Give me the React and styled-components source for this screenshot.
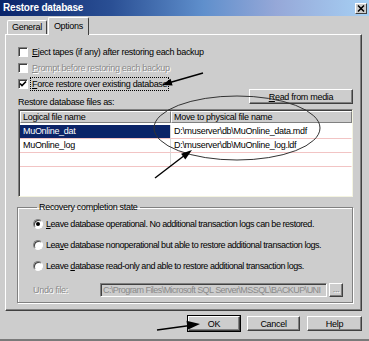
import React from "react";
import styled, { createGlobalStyle } from "styled-components";

const Global = createGlobalStyle`
  html, body { margin: 0; padding: 0; background: #cdcdcd; }
  body {
    font-family: "Liberation Sans", Arial, sans-serif;
    font-size: 9px;
    letter-spacing: -0.3px;
    color: #000;
  }
  * { box-sizing: border-box; }
`;

const Window = styled.div`
  position: relative;
  width: 369px;
  height: 341px;
  background: #cdcdcd;
  border-bottom: 2px solid #7a7a7a;
  display: flex;
  flex-direction: column;
  overflow: hidden;
`;

const TitleBar = styled.div`
  height: 16px;
  display: flex;
  align-items: center;
  justify-content: space-between;
  padding: 0 2px 0 3px;
  background: linear-gradient(to right, #0a246a 0%, #2a4f94 30%, #5f8fcc 55%, #96a8d8 75%, #a6d0f4 100%);
`;

const TitleText = styled.span`
  font-weight: bold;
  font-size: 10px;
  letter-spacing: -0.2px;
  color: #fff;
  line-height: 14px;
`;

const CloseButton = styled.div`
  width: 12px;
  height: 11px;
  background: #cdcdcd;
  border-top: 1px solid #fff;
  border-left: 1px solid #fff;
  border-right: 1px solid #404040;
  border-bottom: 1px solid #404040;
  display: flex;
  align-items: center;
  justify-content: center;
`;

const TabRow = styled.div`
  display: flex;
  align-items: flex-end;
  height: 17px;
  margin: 1px 0 0 7px;
  position: relative;
  z-index: 1;
`;

const Tab = styled.div`
  height: ${(p) => (p.$active ? "18px" : "14px")};
  margin-bottom: ${(p) => (p.$active ? "-1px" : "0")};
  margin-left: ${(p) => (p.$active ? "1px" : "0")};
  padding: 0 ${(p) => (p.$active ? "5px" : "4px")};
  background: #cdcdcd;
  border-top: 1px solid #fff;
  border-left: 1px solid #fff;
  border-right: 1px solid #404040;
  border-radius: 2px 2px 0 0;
  line-height: ${(p) => (p.$active ? "14px" : "13px")};
  display: flex;
  align-items: ${(p) => (p.$active ? "flex-start" : "center")};
  padding-top: ${(p) => (p.$active ? "1px" : "0")};
`;

const Panel = styled.div`
  margin: 0 7px 0 5px;
  border-top: 1px solid #fff;
  border-left: 1px solid #fff;
  border-right: 1px solid #404040;
  border-bottom: 1px solid #404040;
  box-shadow: inset -1px -1px 0 #808080;
  padding: 9px 8px 7px 12px;
  display: flex;
  flex-direction: column;
`;

const CheckRow = styled.div`
  height: 16px;
  display: flex;
  align-items: center;
  gap: 3px;
  color: ${(p) => (p.$disabled ? "#8a8a8a" : "#000")};
  text-shadow: ${(p) => (p.$disabled ? "1px 1px 0 #fff" : "none")};
`;

const Box = styled.div`
  width: 10px;
  height: 10px;
  background: #fff;
  border-top: 1px solid #808080;
  border-left: 1px solid #808080;
  border-right: 1px solid #fff;
  border-bottom: 1px solid #fff;
  box-shadow: inset 1px 1px 0 #404040;
  display: flex;
  align-items: center;
  justify-content: center;
`;

const Label = styled.span`
  line-height: 12px;
  white-space: nowrap;
  padding: 0 1px;
  border: 1px ${(p) => (p.$focus ? "dotted #000" : "solid transparent")};
  margin-left: -1px;
`;

const FilesRow = styled.div`
  display: flex;
  justify-content: space-between;
  align-items: flex-start;
  margin-top: -3px;
  height: 19px;
`;

const PlainLabel = styled.span`
  margin-top: 7px;
  line-height: 12px;
  white-space: nowrap;
`;

const Button = styled.div`
  width: ${(p) => p.$w}px;
  height: 15px;
  background: #cdcdcd;
  border-top: 1px solid #fff;
  border-left: 1px solid #fff;
  border-right: 1px solid #404040;
  border-bottom: 1px solid #404040;
  box-shadow: inset -1px -1px 0 #808080${(p) => (p.$default ? ", 0 0 0 1px #000" : "")};
  display: flex;
  align-items: center;
  justify-content: center;
  line-height: 12px;
  white-space: nowrap;
  color: ${(p) => (p.$disabled ? "#8a8a8a" : "#000")};
`;

const Table = styled.div`
  margin-top: 1px;
  height: 88px;
  background: #fff;
  border-top: 1px solid #808080;
  border-left: 1px solid #808080;
  border-right: 1px solid #f4f4e0;
  border-bottom: 1px solid #f4f4e0;
  box-shadow: inset 1px 1px 0 #404040;
  display: grid;
  grid-template-columns: 151px 1fr;
  grid-auto-rows: 14px;
  align-content: start;
  padding: 1px 0 0 1px;
`;

const HeadCell = styled.div`
  height: 12px;
  background: #cdcdcd;
  border-top: 1px solid #fff;
  border-left: 1px solid #fff;
  border-right: 1px solid #808080;
  border-bottom: 1px solid #808080;
  line-height: 10px;
  padding-left: 2px;
  white-space: nowrap;
  overflow: hidden;
`;

const Cell = styled.div`
  height: 14px;
  border-bottom: 1px solid #f2c4c4;
  border-right: 1px solid ${(p) => (p.$last ? "transparent" : "#d8d8d8")};
  background: ${(p) => (p.$sel ? "#0b2468" : "#fff")};
  color: ${(p) => (p.$sel ? "#fff" : "#000")};
  line-height: 13px;
  padding-left: 3px;
  white-space: nowrap;
  overflow: hidden;
`;

const Group = styled.fieldset`
  margin: 4px 0 0 -1px;
  padding: 0 0 5px 15px;
  border: 1px solid #808080;
  box-shadow: inset 1px 1px 0 #fff, 1px 1px 0 #fff;
  min-width: 0;
`;

const Legend = styled.legend`
  padding: 0 2px;
  margin-left: 4px;
  line-height: 12px;
`;

const RadioRow = styled.div`
  height: 21px;
  display: flex;
  align-items: center;
  gap: 3px;
  white-space: nowrap;
  letter-spacing: -0.45px;
`;

const Radio = styled.div`
  width: 10px;
  height: 10px;
  flex: none;
  border-radius: 50%;
  background: #fff;
  border: 1px solid;
  border-color: #808080 #fff #fff #808080;
  box-shadow: inset 1px 1px 0 #404040;
  display: flex;
  align-items: center;
  justify-content: center;
  &::after {
    content: "";
    width: 4px;
    height: 4px;
    border-radius: 50%;
    background: ${(p) => (p.$on ? "#000" : "transparent")};
  }
`;

const UndoRow = styled.div`
  margin-top: 7px;
  height: 14px;
  display: flex;
  align-items: center;
`;

const DisabledLabel = styled.span`
  width: 67px;
  flex: none;
  color: #8a8a8a;
  text-shadow: 1px 1px 0 #fff;
  line-height: 12px;
`;

const TextBox = styled.div`
  width: 227px;
  flex: none;
  height: 14px;
  background: #cdcdcd;
  border-top: 1px solid #808080;
  border-left: 1px solid #808080;
  border-right: 1px solid #fff;
  border-bottom: 1px solid #fff;
  box-shadow: inset 1px 1px 0 #404040;
  color: #8a8a8a;
  line-height: 12px;
  padding-left: 2px;
  letter-spacing: -0.55px;
  white-space: nowrap;
  overflow: hidden;
  margin-right: 2px;
`;

const SmallButton = styled.div`
  width: 14px;
  height: 14px;
  flex: none;
  border-top: 1px solid #fff;
  border-left: 1px solid #fff;
  border-right: 1px solid #404040;
  border-bottom: 1px solid #404040;
  box-shadow: inset -1px -1px 0 #808080;
  color: #8a8a8a;
  text-shadow: 1px 1px 0 #fff;
  line-height: 10px;
  text-align: center;
`;

const ButtonRow = styled.div`
  display: flex;
  justify-content: flex-end;
  gap: 7px;
  margin: 5px 7px 0 0;
`;

const Overlay = styled.svg`
  position: absolute;
  left: 0;
  top: 0;
  pointer-events: none;
`;

const Check = () => (
  <svg width="8" height="8" viewBox="0 0 8 8">
    <path d="M1 3.5 L3 5.5 L7 1.5" stroke="#000" strokeWidth="1.6" fill="none" />
  </svg>
);

export default function App() {
  return (
    <>
      <Global />
      <Window>
        <TitleBar>
          <TitleText>Restore database</TitleText>
          <CloseButton>
            <svg width="8" height="7" viewBox="0 0 8 7">
              <path d="M1 0.5 L7 6.5 M7 0.5 L1 6.5" stroke="#000" strokeWidth="1.5" />
            </svg>
          </CloseButton>
        </TitleBar>
        <TabRow>
          <Tab>General</Tab>
          <Tab $active>Options</Tab>
        </TabRow>
        <Panel>
          <CheckRow>
            <Box />
            <Label><u>E</u>ject tapes (if any) after restoring each backup</Label>
          </CheckRow>
          <CheckRow $disabled>
            <Box />
            <Label><u>P</u>rompt before restoring each backup</Label>
          </CheckRow>
          <CheckRow>
            <Box><Check /></Box>
            <Label $focus><u>F</u>orce restore over existing database</Label>
          </CheckRow>
          <FilesRow>
            <PlainLabel>Restore database files as:</PlainLabel>
            <Button $w={104}><u>R</u>ead from media</Button>
          </FilesRow>
          <Table>
            <HeadCell>Logical file name</HeadCell>
            <HeadCell>Move to physical file name</HeadCell>
            <Cell $sel>MuOnline_dat</Cell>
            <Cell $last>D:\muserver\db\MuOnline_data.mdf</Cell>
            <Cell>MuOnline_log</Cell>
            <Cell $last>D:\muserver\db\MuOnline_log.ldf</Cell>
            <Cell />
            <Cell $last />
          </Table>
          <Group>
            <Legend>Recovery completion state</Legend>
            <RadioRow>
              <Radio $on />
              <span><u>L</u>eave database operational. No additional transaction logs can be restored.</span>
            </RadioRow>
            <RadioRow>
              <Radio />
              <span>Lea<u>v</u>e database nonoperational but able to restore additional transaction logs.</span>
            </RadioRow>
            <RadioRow>
              <Radio />
              <span>Leave <u>d</u>atabase read-only and able to restore additional transaction logs.</span>
            </RadioRow>
            <UndoRow>
              <DisabledLabel>Undo file:</DisabledLabel>
              <TextBox>C:\Program Files\Microsoft SQL Server\MSSQL\BACKUP\UNI</TextBox>
              <SmallButton>...</SmallButton>
            </UndoRow>
          </Group>
        </Panel>
        <ButtonRow>
          <Button $w={52} $default>OK</Button>
          <Button $w={53}>Cancel</Button>
          <Button $w={55}>Help</Button>
        </ButtonRow>
        <Overlay width="369" height="341" viewBox="0 0 369 341">
          <ellipse cx="237" cy="128" rx="83" ry="32" fill="none" stroke="#333" strokeWidth="1" />
          <line x1="203" y1="73" x2="170" y2="82.5" stroke="#000" strokeWidth="1.4" />
          <polygon points="162,85 172.6,85.6 170.6,78.8" fill="#000" />
          <line x1="155" y1="178" x2="185" y2="155" stroke="#000" strokeWidth="1.4" />
          <polygon points="192,150 185.3,159.4 181.1,153.8" fill="#000" />
          <line x1="157" y1="330" x2="190" y2="325.5" stroke="#000" strokeWidth="1.6" />
          <polygon points="200,324 187.7,329.7 186.5,320.7" fill="#000" />
        </Overlay>
      </Window>
    </>
  );
}
